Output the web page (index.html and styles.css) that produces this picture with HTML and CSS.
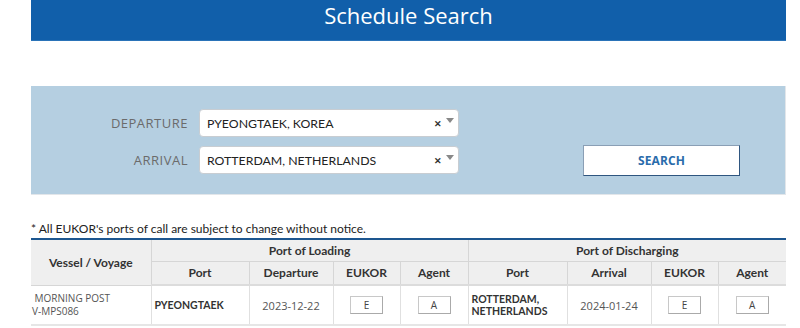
FILE: index.html
```html
<!DOCTYPE html>
<html>
<head>
<meta charset="utf-8">
<link rel="stylesheet" href="styles.css">
</head>
<body>
<div class="page">
  <div class="title-bar"><h1>Schedule Search</h1></div>

  <div class="search-panel">
    <div class="fields">
      <label class="lbl">DEPARTURE</label>
      <div class="select">
        <span class="val">PYEONGTAEK, KOREA</span>
        <span class="clear">&#x2715;</span>
        <span class="arrow"></span>
      </div>
      <label class="lbl">ARRIVAL</label>
      <div class="select">
        <span class="val">ROTTERDAM, NETHERLANDS</span>
        <span class="clear">&#x2715;</span>
        <span class="arrow"></span>
      </div>
    </div>
    <button class="search-btn">SEARCH</button>
  </div>

  <p class="note">* All EUKOR's ports of call are subject to change without notice.</p>

  <table class="sched">
    <colgroup>
      <col style="width:120px"><col style="width:98px"><col style="width:84px"><col style="width:67px"><col style="width:68px">
      <col style="width:99px"><col style="width:84px"><col style="width:67px"><col style="width:68px">
    </colgroup>
    <thead>
      <tr class="h1">
        <th rowspan="2" class="first">Vessel / Voyage</th>
        <th colspan="4">Port of Loading</th>
        <th colspan="4">Port of Discharging</th>
      </tr>
      <tr class="h2">
        <th>Port</th><th>Departure</th><th>EUKOR</th><th>Agent</th>
        <th>Port</th><th>Arrival</th><th>EUKOR</th><th>Agent</th>
      </tr>
    </thead>
    <tbody>
      <tr>
        <td class="vessel">&nbsp;MORNING POST<br>V-MPS086</td>
        <td class="port">PYEONGTAEK</td>
        <td class="date">2023-12-22</td>
        <td class="c"><span class="chip">E</span></td>
        <td class="c"><span class="chip">A</span></td>
        <td class="port">ROTTERDAM,<br>NETHERLANDS</td>
        <td class="date">2024-01-24</td>
        <td class="c"><span class="chip">E</span></td>
        <td class="c"><span class="chip">A</span></td>
      </tr>
    </tbody>
  </table>
</div>
</body>
</html>
```

FILE: styles.css
```css
* { box-sizing: border-box; }
html, body { margin: 0; padding: 0; background: #fff; }
body { font-family: Lato, "Open Sans", sans-serif; color: #222; }

.page { margin-left: 31px; width: 755px; }

.title-bar {
  background: #115faa;
  height: 41px;
  display: flex;
  align-items: center;
  justify-content: center;
  border-bottom: 1px solid #2a73b8;
}
.title-bar h1 {
  margin: 0;
  margin-top: -10px;
  font-family: "Open Sans", "Noto Sans", sans-serif;
  font-weight: 500;
  font-size: 22px;
  color: #fff;
  letter-spacing: 0;
}

.search-panel {
  margin-top: 45px;
  height: 109px;
  background: #b5cfe1;
  border-right: 1px solid #e2e6ea;
  border-bottom: 1px solid #e2e6ea;
  display: flex;
  align-items: flex-start;
  padding-top: 23px;
}
.fields {
  display: grid;
  grid-template-columns: 157px 260px;
  column-gap: 11px;
  row-gap: 9px;
  align-items: center;
}
.lbl {
  text-align: right;
  font-family: "Open Sans", sans-serif;
  font-size: 13px;
  color: #6b6b6b;
  letter-spacing: 0.5px;
}
.select {
  height: 28px;
  background: #fff;
  border: 1px solid #c8cdd2;
  border-radius: 4px;
  display: flex;
  align-items: center;
  padding-left: 7px;
  padding-right: 4px;
}
.select .val { flex: 1; font-size: 12.3px; color: #222; }
.select .clear { font-size: 9px; font-weight: bold; color: #333; margin-right: 4px; margin-top: 1px; }
.select .arrow {
  width: 0; height: 0;
  border-left: 4px solid transparent;
  border-right: 4px solid transparent;
  border-top: 5px solid #888;
  margin-top: -6px;
}
.search-btn {
  margin-left: 124px;
  margin-top: 36px;
  width: 157px;
  height: 31px;
  background: #fff;
  border: 1px solid #8a9fb5;
  border-right-color: #2f5680;
  border-bottom-color: #2f5680;
  font-family: "Open Sans", sans-serif;
  font-weight: 700;
  font-size: 12px;
  color: #2a6cab;
  padding: 0;
  letter-spacing: 0.1px;
}

.note {
  margin: 26px 0 0;
  font-size: 12px;
  line-height: 15px;
  color: #222;
}

.sched {
  margin-top: 2px;
  width: 755px;
  border-collapse: collapse;
  table-layout: fixed;
  border-top: 2px solid #1d568f;
}
.sched th {
  background: #efefef;
  font-size: 12px;
  font-weight: 700;
  color: #333;
  border: 1px solid #d6d6d6;
  padding: 0;
}
.sched th.first { border-left: none; }
.sched tr.h1 th { height: 22px; }
.sched tr.h2 th { height: 24px; border-bottom: 2px solid #dcdcdc; }
.sched tr th:last-child { border-right: none; }
.sched td {
  height: 40px;
  border-right: 1px solid #e0e0e0;
  border-bottom: 2px solid #e6e6e6;
  font-size: 11px;
  color: #555;
  padding: 0;
}
.sched td:last-child { border-right: none; }
.sched td.vessel { padding-left: 1px; line-height: 13px; font-family: "Open Sans", sans-serif; font-size: 10px; color: #555; }
.sched td.port { font-weight: 700; color: #333; padding-left: 3px; line-height: 12px; font-family: Lato, sans-serif; font-size: 10.5px; }
.sched td.date { text-align: center; font-family: "Open Sans", sans-serif; font-size: 11px; color: #555; }
.sched td.c { text-align: center; }
.chip {
  display: inline-block;
  width: 33px;
  height: 18px;
  line-height: 17px;
  border: 1px solid #c8c8c8;
  border-right-color: #aaa;
  border-bottom-color: #aaa;
  background: #fff;
  font-family: "Open Sans", sans-serif;
  font-size: 10px;
  color: #444;
  vertical-align: middle;
}
```
